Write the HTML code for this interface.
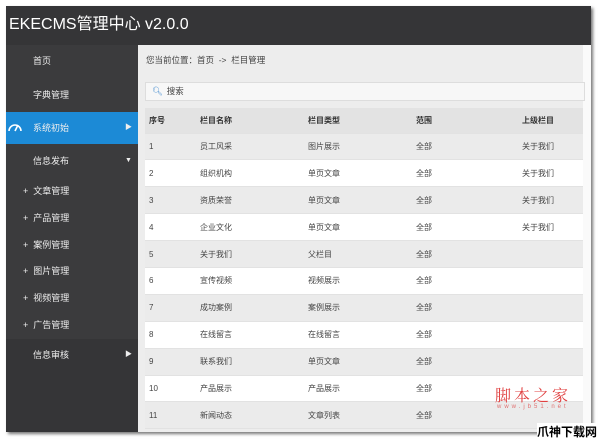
<!DOCTYPE html><html><head><meta charset="utf-8"><style>
body{margin:0;width:600px;height:438px;background:#fff;position:relative;overflow:hidden;font-family:"Liberation Sans","Noto Sans CJK SC",sans-serif;}
.win{position:absolute;left:6px;top:6px;width:585px;height:426px;background:#fafafa;box-shadow:2px 2px 3px #777;overflow:hidden}
.hd{position:absolute;left:0;top:0;width:585px;height:39px;background:#353537;color:#fff;font-size:16px;line-height:38px;padding-left:3px}
.sb{position:absolute;left:0;top:39px;width:132px;height:387px;background:#3b3b3d;color:#eee;font-size:9px}
.sb div{position:absolute;left:0;width:132px}
.ct{position:absolute;left:132px;top:39px;width:445px;height:387px;background:#ededed}
.bc{position:absolute;left:0;top:0;width:445px;height:30px;font-size:8.5px;line-height:30px;padding-left:8px;color:#444}
.sr{position:absolute;left:7px;top:37px;width:438px;height:17px;background:#f7f7f7;border:1px solid #ddd;font-size:8.5px;line-height:17px;color:#444}
table{position:absolute;left:7px;top:63px;width:438px;border-collapse:collapse;table-layout:fixed;font-size:8px;color:#444}
td,th{height:26.9px;padding:0;text-align:left;font-weight:normal;border-bottom:1px solid #e2e2e2;box-sizing:border-box}
th{height:25px;background:#e3e3e3;font-weight:bold;color:#333}
tr:nth-child(even) td{background:#ebebeb}
tr:nth-child(odd) td{background:#fff}
</style></head><body>
<div class="win">
<div class="hd">EKECMS管理中心 v2.0.0</div>
<div class="sb">
<div style="top:10px;line-height:12px;padding-left:27px">首页</div>
<div style="top:44px;line-height:12px;padding-left:27px">字典管理</div>
<div style="top:67px;height:32px;line-height:32px;background:#1c8ad6;padding-left:0"><svg style="position:absolute;left:2px;top:10px" width="14" height="10" viewBox="0 0 14 10"><path d="M1 9 A6 6 0 0 1 13 9" fill="none" stroke="#fff" stroke-width="1.6"/><path d="M7 9 L10 3" stroke="#fff" stroke-width="1.6"/></svg><span style="position:absolute;left:27px">系统初始</span><span style="position:absolute;left:119px;font-size:7px">▶</span></div>
<div style="top:110px;line-height:12px;padding-left:27px">信息发布<span style="position:absolute;left:119px;font-size:7px">▼</span></div>
<div style="top:140px;line-height:12px;padding-left:17px">+ &nbsp;文章管理</div>
<div style="top:167px;line-height:12px;padding-left:17px">+ &nbsp;产品管理</div>
<div style="top:194px;line-height:12px;padding-left:17px">+ &nbsp;案例管理</div>
<div style="top:220px;line-height:12px;padding-left:17px">+ &nbsp;图片管理</div>
<div style="top:247px;line-height:12px;padding-left:17px">+ &nbsp;视频管理</div>
<div style="top:274px;line-height:12px;padding-left:17px">+ &nbsp;广告管理</div>
<div style="top:294px;height:93px;background:#353537"></div>
<div style="top:304px;line-height:12px;padding-left:27px">信息审核<span style="position:absolute;left:119px;font-size:7px">▶</span></div>
</div>
<div class="ct">
<div class="bc">您当前位置：首页 &nbsp;-&gt; &nbsp;栏目管理</div>
<div class="sr"><span style="color:#4a8fd0;padding:0 4px 0 6px">🔍︎</span>搜索</div>
<table>
<tr><th style="width:55px;padding-left:4px">序号</th><th style="width:108px">栏目名称</th><th style="width:108px">栏目类型</th><th style="width:106px">范围</th><th>上级栏目</th></tr>
<tr><td style="padding-left:4px">1</td><td>员工风采</td><td>图片展示</td><td>全部</td><td>关于我们</td></tr>
<tr><td style="padding-left:4px">2</td><td>组织机构</td><td>单页文章</td><td>全部</td><td>关于我们</td></tr>
<tr><td style="padding-left:4px">3</td><td>资质荣誉</td><td>单页文章</td><td>全部</td><td>关于我们</td></tr>
<tr><td style="padding-left:4px">4</td><td>企业文化</td><td>单页文章</td><td>全部</td><td>关于我们</td></tr>
<tr><td style="padding-left:4px">5</td><td>关于我们</td><td>父栏目</td><td>全部</td><td></td></tr>
<tr><td style="padding-left:4px">6</td><td>宣传视频</td><td>视频展示</td><td>全部</td><td></td></tr>
<tr><td style="padding-left:4px">7</td><td>成功案例</td><td>案例展示</td><td>全部</td><td></td></tr>
<tr><td style="padding-left:4px">8</td><td>在线留言</td><td>在线留言</td><td>全部</td><td></td></tr>
<tr><td style="padding-left:4px">9</td><td>联系我们</td><td>单页文章</td><td>全部</td><td></td></tr>
<tr><td style="padding-left:4px">10</td><td>产品展示</td><td>产品展示</td><td>全部</td><td></td></tr>
<tr><td style="padding-left:4px">11</td><td>新闻动态</td><td>文章列表</td><td>全部</td><td></td></tr>
</table>
</div>
</div>
<div style="position:absolute;left:495px;top:383px;color:#e04040;font-family:'Noto Serif CJK SC',serif;font-size:16px;letter-spacing:3px">脚本之家</div>
<div style="position:absolute;left:497px;top:404px;color:#e07070;font-size:6px;letter-spacing:3px">www.jb51.net</div>
<div style="position:absolute;left:537px;top:423px;color:#000;font-size:12px;font-weight:bold;background:#fff">爪神下载网</div>
</body></html>
